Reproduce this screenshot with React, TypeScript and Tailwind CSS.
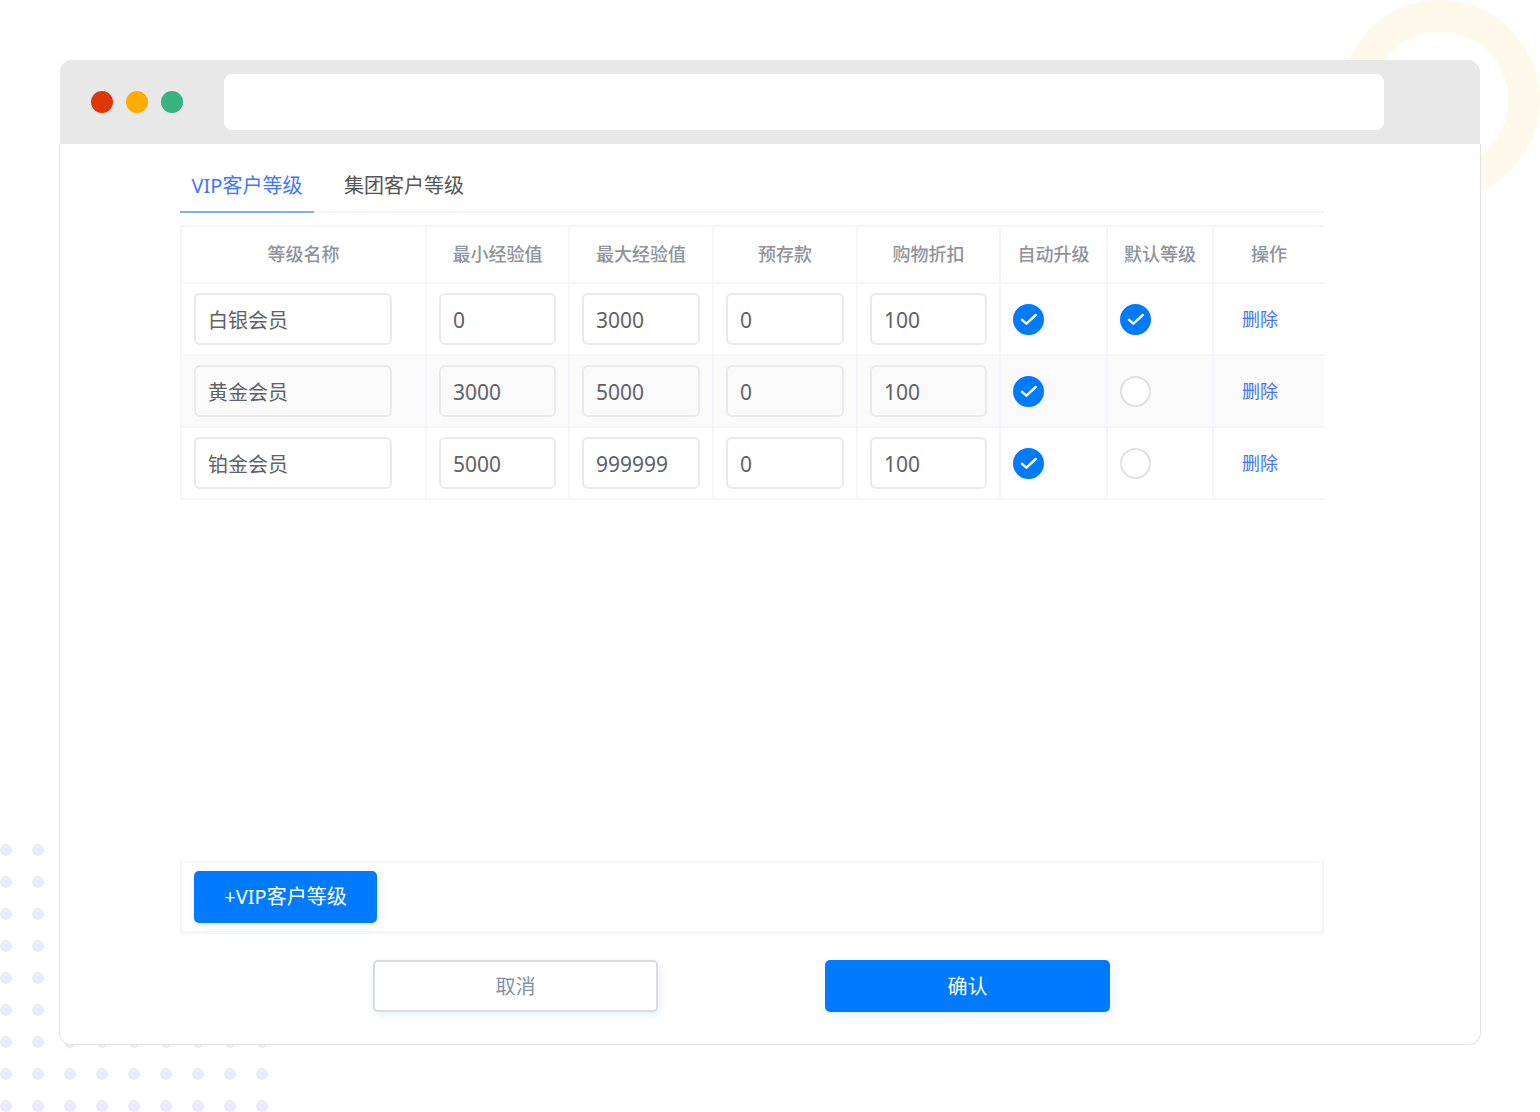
import { useState } from 'react';
import clsx from 'clsx';

type Level = {
  id: number;
  name: string;
  min: string;
  max: string;
  deposit: string;
  discount: string;
  autoUpgrade: boolean;
  isDefault: boolean;
};

const initialLevels: Level[] = [
  { id: 1, name: '白银会员', min: '0', max: '3000', deposit: '0', discount: '100', autoUpgrade: true, isDefault: true },
  { id: 2, name: '黄金会员', min: '3000', max: '5000', deposit: '0', discount: '100', autoUpgrade: true, isDefault: false },
  { id: 3, name: '铂金会员', min: '5000', max: '999999', deposit: '0', discount: '100', autoUpgrade: true, isDefault: false }
];

const columns = [
  { title: '等级名称', width: 'w-[245px]' },
  { title: '最小经验值', width: 'w-[143px]' },
  { title: '最大经验值', width: 'w-[144px]' },
  { title: '预存款', width: 'w-[144px]' },
  { title: '购物折扣', width: 'w-[143px]' },
  { title: '自动升级', width: 'w-[107px]' },
  { title: '默认等级', width: 'w-[106px]' },
  { title: '操作', width: 'w-[110px]' }
];

const numberFields = [
  { key: 'min', label: '最小经验值' },
  { key: 'max', label: '最大经验值' },
  { key: 'deposit', label: '预存款' },
  { key: 'discount', label: '购物折扣' }
] as const;

const cellClass = 'border-r-2 border-b-2 border-[#f5f6fb] last:border-r-0 px-3';
const inputClass =
  'block h-[52px] w-full rounded-md border-2 border-[#eaeaea] bg-transparent pl-3 text-[#606266] outline-none';

const Backdrop = () => (
  <div aria-hidden="true">
    <div className="absolute right-0 top-0 size-[200px] rounded-full border-[32px] border-[#fff9eb]" />
    <svg className="absolute bottom-0 left-0" width="272" height="268">
      <defs>
        <pattern id="dots" width="32" height="32" patternUnits="userSpaceOnUse">
          <circle cx="6" cy="6" r="6" fill="#e9ebff" />
        </pattern>
      </defs>
      <rect width="272" height="268" fill="url(#dots)" />
    </svg>
  </div>
);

const RoundCheck = ({
  checked,
  label,
  onChange
}: {
  checked: boolean;
  label: string;
  onChange: () => void;
}) => (
  <label className="grid size-[31px] cursor-pointer place-items-center">
    <input
      type="checkbox"
      aria-label={label}
      checked={checked}
      onChange={onChange}
      className="col-start-1 row-start-1 size-[31px] cursor-pointer appearance-none rounded-full border-2 border-[#e0e0e0] bg-white checked:border-[#007aff] checked:bg-[#007aff]"
    />
    {checked && (
      <svg
        className="pointer-events-none z-10 col-start-1 row-start-1"
        width="31"
        height="31"
        viewBox="0 0 31 31"
        fill="none"
        stroke="#fff"
        strokeWidth="2.4"
        strokeLinecap="round"
        strokeLinejoin="round"
      >
        <path d="M9 15.8l4.4 3.9 9.4-8.7" />
      </svg>
    )}
  </label>
);

const App = () => {
  const [levels, setLevels] = useState(initialLevels);
  const [tab, setTab] = useState(0);

  const update = (id: number, patch: Partial<Level>) =>
    setLevels(levels.map((l) => (l.id === id ? { ...l, ...patch } : l)));

  return (
    <div className="relative flex min-h-screen flex-col overflow-hidden bg-white px-[59px] pt-[60px] pb-[67px] font-['Noto_Sans','Noto_Sans_CJK_SC',sans-serif] text-xl text-[#606266]">
      <Backdrop />

      <div className="relative flex flex-1 flex-col">
        {/* browser bar */}
        <header className="mx-px flex h-[84px] items-center rounded-t-xl bg-[#e8e8e8] pl-[31px] pr-24">
          <div className="flex gap-[13px]">
            <span className="size-[22px] rounded-full bg-[#de350b]" />
            <span className="size-[22px] rounded-full bg-[#ffab00]" />
            <span className="size-[22px] rounded-full bg-[#36b37e]" />
          </div>
          <input aria-label="地址" className="ml-[41px] h-14 flex-1 rounded-lg bg-white px-4 outline-none" />
        </header>

        <main className="flex flex-1 flex-col rounded-b-xl border border-t-0 border-[#e3e3e3] bg-white pl-[120px] pr-[156px] pb-8">
          <div role="tablist" className="flex border-b-2 border-[#f5f5f7]">
            {['VIP客户等级', '集团客户等级'].map((title, i) => (
              <button
                key={title}
                role="tab"
                aria-selected={tab === i}
                onClick={() => setTab(i)}
                className={clsx(
                  '-mb-0.5 mr-5 flex h-[69px] min-w-[134px] items-center justify-center border-b-2 px-2.5 pt-4',
                  tab === i ? 'border-[#85a9fc] text-[#4076ff]' : 'border-transparent text-[#555]'
                )}
              >
                {title}
              </button>
            ))}
          </div>

          <table className="mt-3 w-full table-fixed border-separate border-spacing-0 border-t-2 border-l-2 border-[#f5f6fb]">
            <thead>
              <tr className="h-[57px]">
                {columns.map((col) => (
                  <th
                    key={col.title}
                    className={clsx(cellClass, col.width, 'px-0 pb-0.5 text-center text-lg font-medium text-[#909399]')}
                  >
                    {col.title}
                  </th>
                ))}
              </tr>
            </thead>
            <tbody>
              {levels.map((level) => (
                <tr key={level.id} className="h-[72px] even:bg-[#fafafa]">
                  <td className={cellClass}>
                    <input
                      aria-label="等级名称"
                      value={level.name}
                      onChange={(e) => update(level.id, { name: e.target.value })}
                      className={clsx(inputClass, 'max-w-[198px]')}
                    />
                  </td>
                  {numberFields.map(({ key, label }) => (
                    <td key={key} className={cellClass}>
                      <input
                        aria-label={label}
                        value={level[key]}
                        onChange={(e) => update(level.id, { [key]: e.target.value })}
                        className={clsx(inputClass, 'pt-0.5 text-[21px]')}
                      />
                    </td>
                  ))}
                  <td className={cellClass}>
                    <RoundCheck
                      label="自动升级"
                      checked={level.autoUpgrade}
                      onChange={() => update(level.id, { autoUpgrade: !level.autoUpgrade })}
                    />
                  </td>
                  <td className={cellClass}>
                    <RoundCheck
                      label="默认等级"
                      checked={level.isDefault}
                      onChange={() => setLevels(levels.map((l) => ({ ...l, isDefault: l.id === level.id })))}
                    />
                  </td>
                  <td className={cellClass}>
                    <button
                      onClick={() => setLevels(levels.filter((l) => l.id !== level.id))}
                      className="pl-4 text-lg text-[#4076ff]"
                    >
                      删除
                    </button>
                  </td>
                </tr>
              ))}
            </tbody>
          </table>

          <div className="mt-auto border-2 border-b-3 border-[#f5f6fb] px-3 py-2">
            <button className="h-[52px] min-w-[183px] rounded-[5px] bg-[#007aff] text-white shadow-[2px_3px_8px_rgba(64,118,255,0.12)]">
              +VIP客户等级
            </button>
          </div>

          <div className="mt-[26px] flex gap-[167px] pl-[193px]">
            <button className="h-[52px] w-[285px] rounded-[5px] border-2 border-[#d9dbdd] bg-white pt-0.5 text-[#8492a6] shadow-[2px_3px_8px_rgba(64,118,255,0.12)]">
              取消
            </button>
            <button className="h-[52px] w-[285px] rounded-[5px] bg-[#007aff] pt-0.5 text-white shadow-[2px_3px_8px_rgba(64,118,255,0.12)]">
              确认
            </button>
          </div>
        </main>
      </div>
    </div>
  );
};

export default App;
